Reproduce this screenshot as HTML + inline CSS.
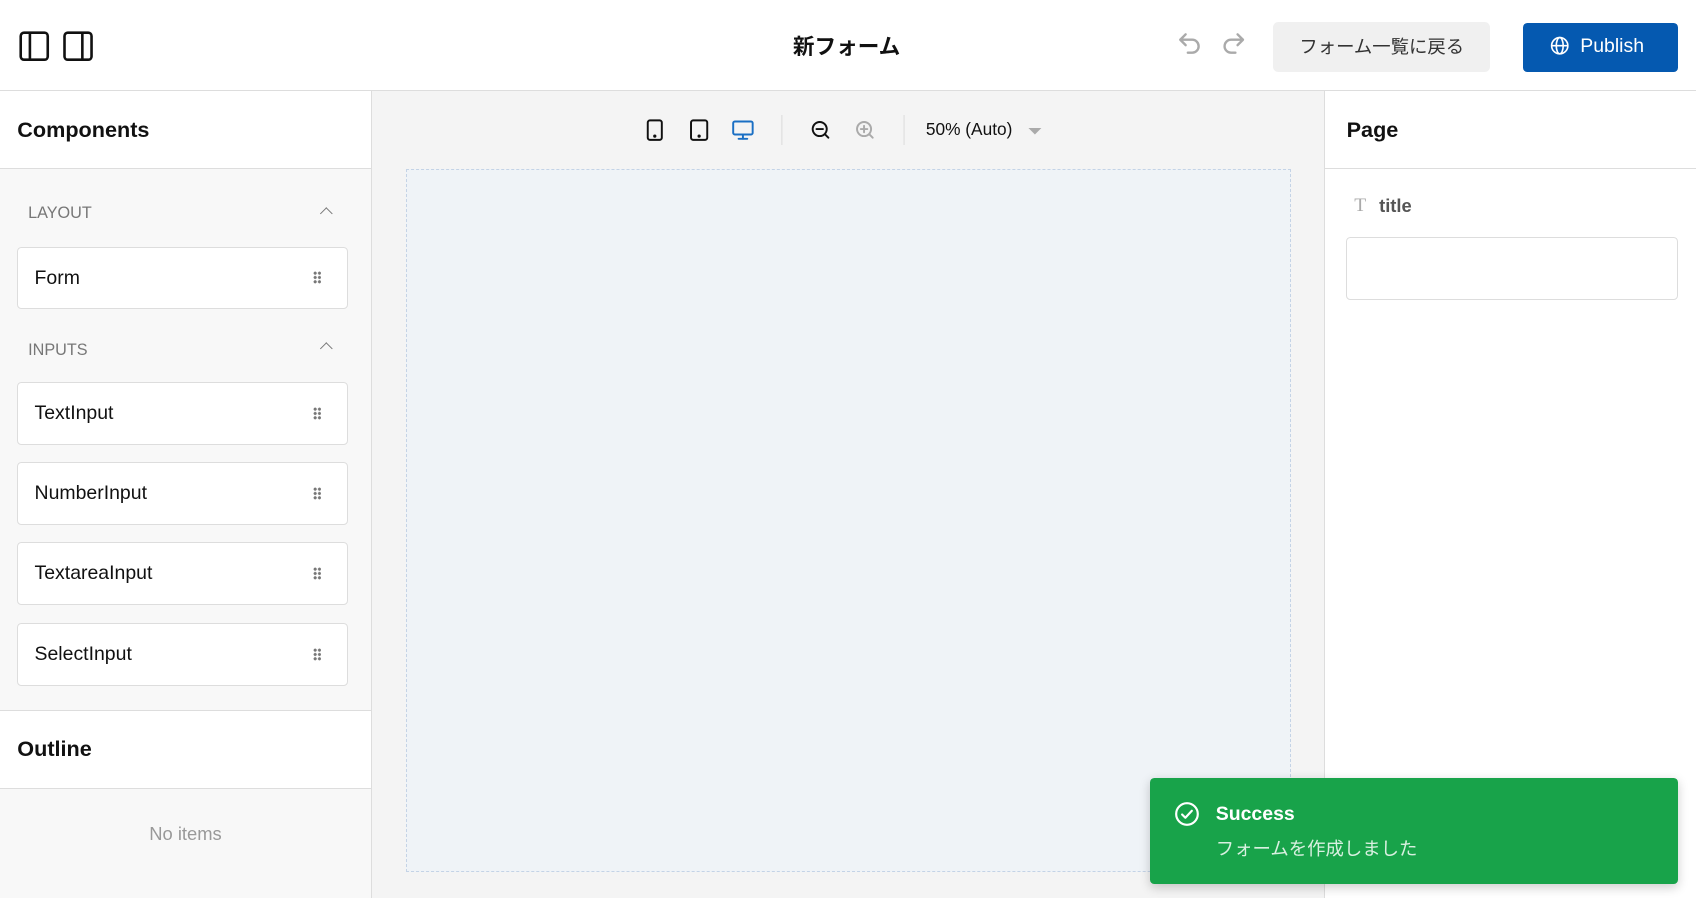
<!DOCTYPE html>
<html><head><meta charset="utf-8"><style>
html{zoom:1.08163}
*{box-sizing:border-box;margin:0;padding:0}
body{width:1568px;height:830px;overflow:hidden;font-family:"Liberation Sans","Noto Sans CJK JP",sans-serif;background:#fff;position:relative;color:#111}
.a{position:absolute}
.hdr{left:0;top:0;width:1568px;height:84px;border-bottom:1px solid #ddd;background:#fff}
.left{left:0;top:84px;width:344px;height:746px;border-right:1px solid #ddd;background:#f8f8f8}
.center{left:344px;top:84px;width:880px;height:746px;background:#f4f4f4}
.right{left:1224px;top:84px;width:344px;height:746px;border-left:1px solid #ddd;background:#fff}
.sh{font-weight:bold;font-size:20px}
.card{left:16px;width:306px;height:58px;background:#fff;border:1px solid #ddd;border-radius:4px;font-size:18px;padding-left:15px;line-height:56px}
.dots{position:absolute;right:24px;top:22px;width:8px;height:12px;background:radial-gradient(circle,#777 1.3px,transparent 1.6px) 0 0/4px 4px}
.cat{left:26px;font-size:15px;color:#777}
.chev{left:298px;width:8px;height:8px;border-left:1.5px solid #777;border-top:1.5px solid #777;transform:rotate(45deg)}
</style></head><body>
<div class="a hdr"></div>
<svg class="a" style="left:17px;top:28px" width="72" height="30" viewBox="0 0 72 30" fill="none" stroke="#111" stroke-width="2.4"><rect x="2.5" y="2.5" width="25" height="25" rx="3"/><line x1="11" y1="3" x2="11" y2="27"/><rect x="43" y="2.5" width="25" height="25" rx="3"/><line x1="59.5" y1="3" x2="59.5" y2="27"/></svg>
<div class="a" style="left:733px;top:28px;font-size:20px;font-weight:bold">新フォーム</div>
<svg class="a" style="left:1088px;top:28px" width="64" height="28" viewBox="0 0 64 28" fill="none" stroke="#aaa" stroke-width="2.2" stroke-linecap="round" stroke-linejoin="round"><path d="M8 4 L3 9 L8 14 M3 9 H14 a6 6 0 0 1 0 12 H10"/><path d="M56 4 L61 9 L56 14 M61 9 H50 a6 6 0 0 0 0 12 H54"/></svg>
<div class="a" style="left:1177px;top:20px;width:201px;height:47px;background:#f0f0f0;border-radius:5px;font-size:17px;color:#333;text-align:center;line-height:47px">フォーム一覧に戻る</div>
<div class="a" style="left:1408px;top:21px;width:143px;height:46px;background:#0559b0;border-radius:4px;color:#fff;font-size:18px;line-height:44px;padding-left:53px">Publish</div>
<svg class="a" style="left:1433px;top:33px" width="18" height="18" viewBox="0 0 18 18" fill="none" stroke="#fff" stroke-width="1.5"><circle cx="9" cy="9" r="7.5"/><ellipse cx="9" cy="9" rx="3.2" ry="7.5"/><line x1="1.5" y1="9" x2="16.5" y2="9"/></svg>

<div class="a left"></div>
<div class="a" style="left:0;top:84px;width:343px;height:72px;background:#fff;border-bottom:1px solid #ddd"></div>
<div class="a sh" style="left:16px;top:108px">Components</div>
<div class="a cat" style="top:189px">LAYOUT</div><div class="a chev" style="top:193px"></div>
<div class="a card" style="top:228px">Form<span class="dots"></span></div>
<div class="a cat" style="top:315px">INPUTS</div><div class="a chev" style="top:318px"></div>
<div class="a card" style="top:353px">TextInput<span class="dots"></span></div>
<div class="a card" style="top:427px">NumberInput<span class="dots"></span></div>
<div class="a card" style="top:501px">TextareaInput<span class="dots"></span></div>
<div class="a card" style="top:576px">SelectInput<span class="dots"></span></div>
<div class="a" style="left:0;top:656px;width:343px;height:73px;background:#fff;border-top:1px solid #ddd;border-bottom:1px solid #ddd"></div>
<div class="a sh" style="left:16px;top:680px">Outline</div>
<div class="a" style="left:0;top:761px;width:343px;text-align:center;font-size:17px;color:#999">No items</div>

<div class="a center"></div>
<svg class="a" style="left:590px;top:106px" width="400" height="28" viewBox="0 0 400 28" fill="none" stroke-width="1.8" stroke-linecap="round">
<g stroke="#111"><rect x="9" y="5" width="13" height="18" rx="2"/><circle cx="15.5" cy="19.5" r=".6" fill="#111"/><rect x="49" y="5" width="15" height="18" rx="2"/><circle cx="56.5" cy="19.5" r=".6" fill="#111"/></g>
<g stroke="#1a6fc4"><rect x="88" y="6" width="18" height="12" rx="1.5"/><line x1="97" y1="18" x2="97" y2="22"/><line x1="93" y1="22" x2="101" y2="22"/></g>
<line x1="133" y1="0" x2="133" y2="28" stroke="#ddd" stroke-width="1"/>
<g stroke="#111"><circle cx="168" cy="13" r="6.5"/><line x1="173" y1="18" x2="176" y2="21"/><line x1="165" y1="13" x2="171" y2="13"/></g>
<g stroke="#aaa"><circle cx="209" cy="13" r="6.5"/><line x1="214" y1="18" x2="217" y2="21"/><line x1="206" y1="13" x2="212" y2="13"/><line x1="209" y1="10" x2="209" y2="16"/></g>
<line x1="246" y1="0" x2="246" y2="28" stroke="#ddd" stroke-width="1"/>
<path d="M361 12 h12 l-6 6z" fill="#aaa" stroke="none"/>
</svg>
<div class="a" style="left:856px;top:110px;font-size:16px">50% (Auto)</div>
<div class="a" style="left:375px;top:156px;width:819px;height:650px;background:#eff3f7;border:1px dashed #c4d3e6"></div>

<div class="a right"></div>
<div class="a" style="left:1225px;top:155px;width:343px;border-top:1px solid #ddd"></div>
<div class="a sh" style="left:1245px;top:108px">Page</div>
<div class="a" style="left:1252px;top:180px;font-size:18px;color:#aaa;font-family:'Liberation Serif',serif">T</div>
<div class="a" style="left:1275px;top:180px;font-size:17px;font-weight:bold;color:#555">title</div>
<div class="a" style="left:1244px;top:219px;width:307px;height:58px;border:1px solid #ddd;border-radius:4px"></div>

<div class="a" style="left:1063px;top:719px;width:488px;height:98px;background:#18a34a;border-radius:4px;box-shadow:0 3px 10px rgba(0,0,0,.2)"></div>
<svg class="a" style="left:1085px;top:741px" width="24" height="24" viewBox="0 0 24 24" fill="none" stroke="#fff" stroke-width="2" stroke-linecap="round" stroke-linejoin="round"><circle cx="12" cy="12" r="10"/><path d="M7.5 12.5l3 3 6-6.5"/></svg>
<div class="a" style="left:1124px;top:742px;font-size:18px;color:#fff;font-weight:bold">Success</div>
<div class="a" style="left:1124px;top:772px;font-size:17px;color:#d8f0e0">フォームを作成しました</div>
</body></html>
